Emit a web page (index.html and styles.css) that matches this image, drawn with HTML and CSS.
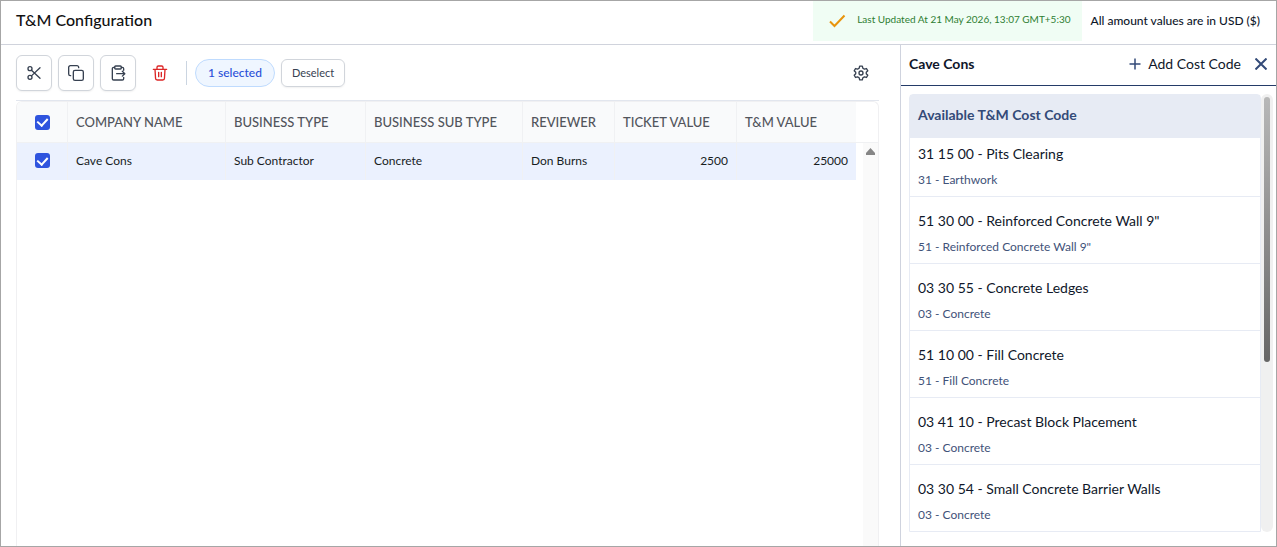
FILE: index.html
```
<!DOCTYPE html>
<html lang="en">
<head>
    <meta charset="UTF-8">
    <meta name="viewport" content="width=device-width, initial-scale=1.0">
    <title>T&amp;M Configuration</title>
    <link rel="stylesheet" href="styles.css">
</head>
<body>
    <header class="topbar">
        <h1 class="title">T&amp;M Configuration</h1>
        <div class="updated">
            <svg class="tick" width="18" height="14" viewBox="0 0 18 14"><path d="M2 7.5l4.5 4.5L16.5 1.5"/></svg>
            <span>Last Updated At 21 May 2026, 13:07 GMT+5:30</span>
        </div>
        <div class="currency">All amount values are in USD ($)</div>
    </header>

    <div class="content">
        <main class="main">
            <div class="toolbar">
                <button class="icon-btn" type="button" aria-label="Cut">
                    <svg class="icon" width="16" height="16" viewBox="0 0 24 24"><circle cx="6" cy="5.5" r="3"/><circle cx="6" cy="18.5" r="3"/><path d="M8.2 7.8L21 20M21 4L8.2 16.3"/></svg>
                </button>
                <button class="icon-btn" type="button" aria-label="Copy">
                    <svg class="icon" width="16" height="16" viewBox="0 0 24 24"><rect x="8" y="8" width="15" height="15" rx="2.5"/><path d="M4 16H3.500a2.500 2.500 0 0 1-2.500-2.500v-10A2.500 2.500 0 0 1 3.500 1h10A2.500 2.500 0 0 1 16 3.500V4"/></svg>
                </button>
                <button class="icon-btn" type="button" aria-label="Paste">
                    <svg class="icon" width="16" height="16" viewBox="0 0 24 24"><rect x="7" y="1.500" width="10" height="4.500" rx="1.500"/><path d="M17 3.500h1.500a2 2 0 0 1 2 2v2.500M20.500 18.500v2a2 2 0 0 1-2 2h-13a2 2 0 0 1-2-2V5.500a2 2 0 0 1 2-2H7M10 13h12M18.500 9.300L22.200 13l-3.700 3.700"/></svg>
                </button>
                <button class="icon-btn delete" type="button" aria-label="Delete">
                    <svg class="icon" width="16" height="16" viewBox="0 0 24 24"><path d="M2 6.500h20M4.500 6.500l.8 13.500a2.500 2.500 0 0 0 2.500 2.500h8.400a2.500 2.500 0 0 0 2.500-2.500l.8-13.500M7.500 6V3.500A2 2 0 0 1 9.500 1.500h5a2 2 0 0 1 2 2V6M10 11v6.500M14 11v6.500"/></svg>
                </button>
                <span class="divider"></span>
                <span class="pill">1 selected</span>
                <button class="deselect" type="button">Deselect</button>
                <button class="settings" type="button" aria-label="Settings">
                    <svg class="icon" width="16" height="16" viewBox="0 0 24 24"><circle cx="12" cy="12" r="3"/><path d="M10 1.800h4l.8 3.100 2.300 1.300 3.100-.9 2 3.400-2.300 2.300v2l2.300 2.300-2 3.400-3.100-.9-2.300 1.300-.8 3.100h-4l-.8-3.100-2.300-1.300-3.100.9-2-3.400L4.100 13v-2L1.800 8.700l2-3.400 3.100.9 2.300-1.300z"/></svg>
                </button>
            </div>

            <div class="grid">
                <table class="table">
                    <colgroup>
                        <col class="c-check"><col class="c-name"><col class="c-type"><col class="c-sub"><col class="c-rev"><col class="c-ticket"><col>
                    </colgroup>
                    <thead>
                        <tr>
                            <th class="check"><input type="checkbox" aria-label="Select all" checked></th>
                            <th>COMPANY NAME</th>
                            <th>BUSINESS TYPE</th>
                            <th>BUSINESS SUB TYPE</th>
                            <th>REVIEWER</th>
                            <th>TICKET VALUE</th>
                            <th>T&amp;M VALUE</th>
                        </tr>
                    </thead>
                    <tbody>
                        <tr>
                            <td class="check"><input type="checkbox" aria-label="Select Cave Cons" checked></td>
                            <td>Cave Cons</td>
                            <td>Sub Contractor</td>
                            <td>Concrete</td>
                            <td>Don Burns</td>
                            <td class="num">2500</td>
                            <td class="num">25000</td>
                        </tr>
                    </tbody>
                </table>
                <div class="gutter">
                    <div class="gutter-head"></div>
                    <div class="gutter-track">
                        <svg width="9" height="7" viewBox="0 0 9 7"><path d="M4.500 0L9 5V7H0V5z" fill="#868686"/></svg>
                    </div>
                </div>
            </div>
        </main>

        <aside class="panel">
            <div class="panel-head">
                <h2 class="panel-title">Cave Cons</h2>
                <button class="add" type="button">
                    <svg class="plus" width="12" height="12" viewBox="0 0 12 12"><path d="M6 0.500v11M0.500 6h11"/></svg>
                    Add Cost Code
                </button>
                <button class="close" type="button" aria-label="Close">
                    <svg class="cross" width="12" height="12" viewBox="0 0 12 12"><path d="M0.500 0.500l11 11M11.500 0.500l-11 11"/></svg>
                </button>
            </div>
            <div class="panel-body">
                <div class="codes">
                    <h3 class="codes-head">Available T&amp;M Cost Code</h3>
                    <ul class="code-list">
                        <li><div class="code">31 15 00 - Pits Clearing</div><div class="group">31 - Earthwork</div></li>
                        <li><div class="code">51 30 00 - Reinforced Concrete Wall 9"</div><div class="group">51 - Reinforced Concrete Wall 9"</div></li>
                        <li><div class="code">03 30 55 - Concrete Ledges</div><div class="group">03 - Concrete</div></li>
                        <li><div class="code">51 10 00 - Fill Concrete</div><div class="group">51 - Fill Concrete</div></li>
                        <li><div class="code">03 41 10 - Precast Block Placement</div><div class="group">03 - Concrete</div></li>
                        <li><div class="code">03 30 54 - Small Concrete Barrier Walls</div><div class="group">03 - Concrete</div></li>
                    </ul>
                </div>
                <div class="scrollbar"><div class="thumb"></div></div>
            </div>
        </aside>
    </div>
</body>
</html>
```
FILE: styles.css
```
* {
    box-sizing: border-box;
}
body {
    display: flex;
    flex-direction: column;
    min-height: 100vh;
    margin: 0;
    border: 1px solid #a6a6a6;
    background-color: #fff;
    color: #0f172a;
    font-family: Lato, "Liberation Sans", sans-serif;
    font-size: 12px;
}
button {
    padding: 0;
    border: none;
    background: none;
    color: inherit;
    font-family: inherit;
    cursor: pointer;
}
h1, h2, h3, ul {
    margin: 0;
    padding: 0;
}
svg {
    display: block;
    flex: none;
}

/* top bar */
.topbar {
    display: flex;
    padding: 0 16px 3px 15px;
    border-bottom: 1px solid #d0d3dc;
    line-height: 40px;
}
.title {
    flex: 1;
    color: #111;
    font-size: 16px;
    font-weight: 500;
    line-height: 38px;
}
.updated {
    display: flex;
    align-items: center;
    gap: 11px;
    padding: 0 12px 0 15px;
    background-color: #f0fdf4;
    color: #2e7d32;
    font-size: 10px;
}
.updated span {
    padding-bottom: 3px;
    line-height: 37px;
}
.tick {
    fill: none;
    stroke: #e8940c;
    stroke-width: 2;
}
.currency {
    margin-left: 8px;
    font-size: 12px;
    font-weight: 500;
}

.content {
    display: flex;
    flex: 1;
}
.main {
    display: flex;
    flex: 1;
    flex-direction: column;
    min-width: 0;
    padding: 10px 21px 0 15px;
}

/* toolbar */
.toolbar {
    display: flex;
    align-items: center;
    gap: 6px;
    padding-bottom: 9px;
    border-bottom: 1px solid #e2e6ee;
}
.icon-btn {
    display: flex;
    align-items: center;
    justify-content: center;
    width: 36px;
    height: 36px;
    border: 1px solid #d1d5db;
    border-radius: 6px;
    background-color: #fff;
    box-shadow: 0 1px 2px rgba(0, 0, 0, 0.06);
    color: #374151;
}
.icon {
    fill: none;
    stroke: currentColor;
    stroke-width: 2;
    stroke-linecap: round;
    stroke-linejoin: round;
}
.delete {
    border-color: transparent;
    box-shadow: none;
    color: #dc2626;
}
.divider {
    width: 1px;
    height: 24px;
    margin: 0 2px;
    background-color: #cbd5e1;
}
.pill {
    padding: 0 12px;
    border: 1px solid #bfdbfe;
    border-radius: 14px;
    background-color: #eff6ff;
    color: #2a4fd8;
    font-size: 12px;
    font-weight: 500;
    line-height: 26px;
}
.deselect {
    padding: 0 10px;
    border: 1px solid #d1d5db;
    border-radius: 6px;
    box-shadow: 0 1px 2px rgba(0, 0, 0, 0.06);
    color: #374151;
    font-size: 11px;
    line-height: 26px;
}
.settings {
    margin-left: auto;
    padding: 10px;
    color: #374151;
}

/* grid */
.grid {
    display: flex;
    flex: 1;
    align-items: stretch;
    border: 1px solid #f0f0f2;
    border-bottom: none;
    border-radius: 6px 6px 0 0;
    overflow: hidden;
}
.table {
    flex: 1;
    align-self: flex-start;
    width: 100%;
    border-collapse: separate;
    border-spacing: 0;
    table-layout: fixed;
}
.c-check { width: 51px; }
.c-name { width: 158px; }
.c-type { width: 140px; }
.c-sub { width: 157px; }
.c-rev { width: 92px; }
.c-ticket { width: 122px; }
th {
    height: 41px;
    padding: 0 8px;
    border-right: 1px solid #f0f1f3;
    border-bottom: 1px solid #f0f1f3;
    background-color: #f9fafb;
    color: #52555c;
    font-size: 13px;
    font-weight: 500;
    text-align: left;
    white-space: nowrap;
}
td {
    height: 37px;
    padding: 0 8px 2px;
    border-right: 1px solid #f0f1f3;
    background-color: #ebf1fe;
    color: #181d1f;
    font-size: 12px;
}
th:last-child,
td:last-child {
    border-right: none;
}
.num {
    text-align: right;
}
.check input {
    display: flex;
    align-items: center;
    justify-content: center;
    appearance: none;
    width: 15px;
    height: 15px;
    margin: 0 0 0 10px;
    border-radius: 3px;
    background-color: #2f54de;
}
.check input::before {
    content: "";
    width: 5px;
    height: 8px;
    margin-bottom: 2px;
    border: solid #fff;
    border-width: 0 2px 2px 0;
    transform: rotate(42deg);
}
.gutter {
    display: flex;
    flex-direction: column;
    width: 22px;
}
.gutter-head {
    height: 41px;
    border-bottom: 1px solid #f0f1f3;
}
.gutter-track {
    display: flex;
    flex: 1;
    align-items: flex-start;
    justify-content: center;
    margin-left: 7px;
    padding-top: 5px;
    background-color: #fafafa;
}

/* cost code panel */
.panel {
    width: 376px;
    border-left: 1px solid #cfd3de;
}
.panel-head {
    display: flex;
    align-items: center;
    padding: 0 9px 2px 8px;
    border-bottom: 1px solid #243b68;
    line-height: 38px;
}
.panel-title {
    flex: 1;
    font-size: 14px;
    font-weight: 700;
}
.add {
    display: flex;
    align-items: center;
    gap: 7px;
    font-size: 14px;
    line-height: 38px;
}
.plus {
    fill: none;
    stroke: #334a78;
    stroke-width: 1.5;
}
.close {
    margin-left: 14px;
}
.cross {
    fill: none;
    stroke: #334a78;
    stroke-width: 2;
}
.panel-body {
    display: flex;
    padding: 8px 3px 0 8px;
}
.codes {
    flex: 1;
    border: 1px solid #e7ebf4;
    border-radius: 4px 4px 0 0;
}
.codes-head {
    padding: 0 8px 3px;
    background-color: #e7ebf4;
    color: #334a78;
    font-size: 14px;
    font-weight: 700;
    line-height: 40px;
}
.code-list {
    list-style: none;
}
.code-list li {
    padding: 8px 8px 6px;
    border-bottom: 1px solid #e7ebf4;
}
.code-list li:first-child {
    padding-top: 0;
}
.code-list li:last-child {
    border-bottom: none;
}
.code {
    font-size: 14px;
    line-height: 32px;
}
.group {
    color: #3f5279;
    font-size: 12px;
    line-height: 20px;
}
.scrollbar {
    width: 12px;
    padding: 3px;
    border-radius: 6px;
    background-color: #f0f0f0;
}
.thumb {
    height: 265px;
    border-radius: 3px;
    background: linear-gradient(#b8b8b8, #666);
}
```
